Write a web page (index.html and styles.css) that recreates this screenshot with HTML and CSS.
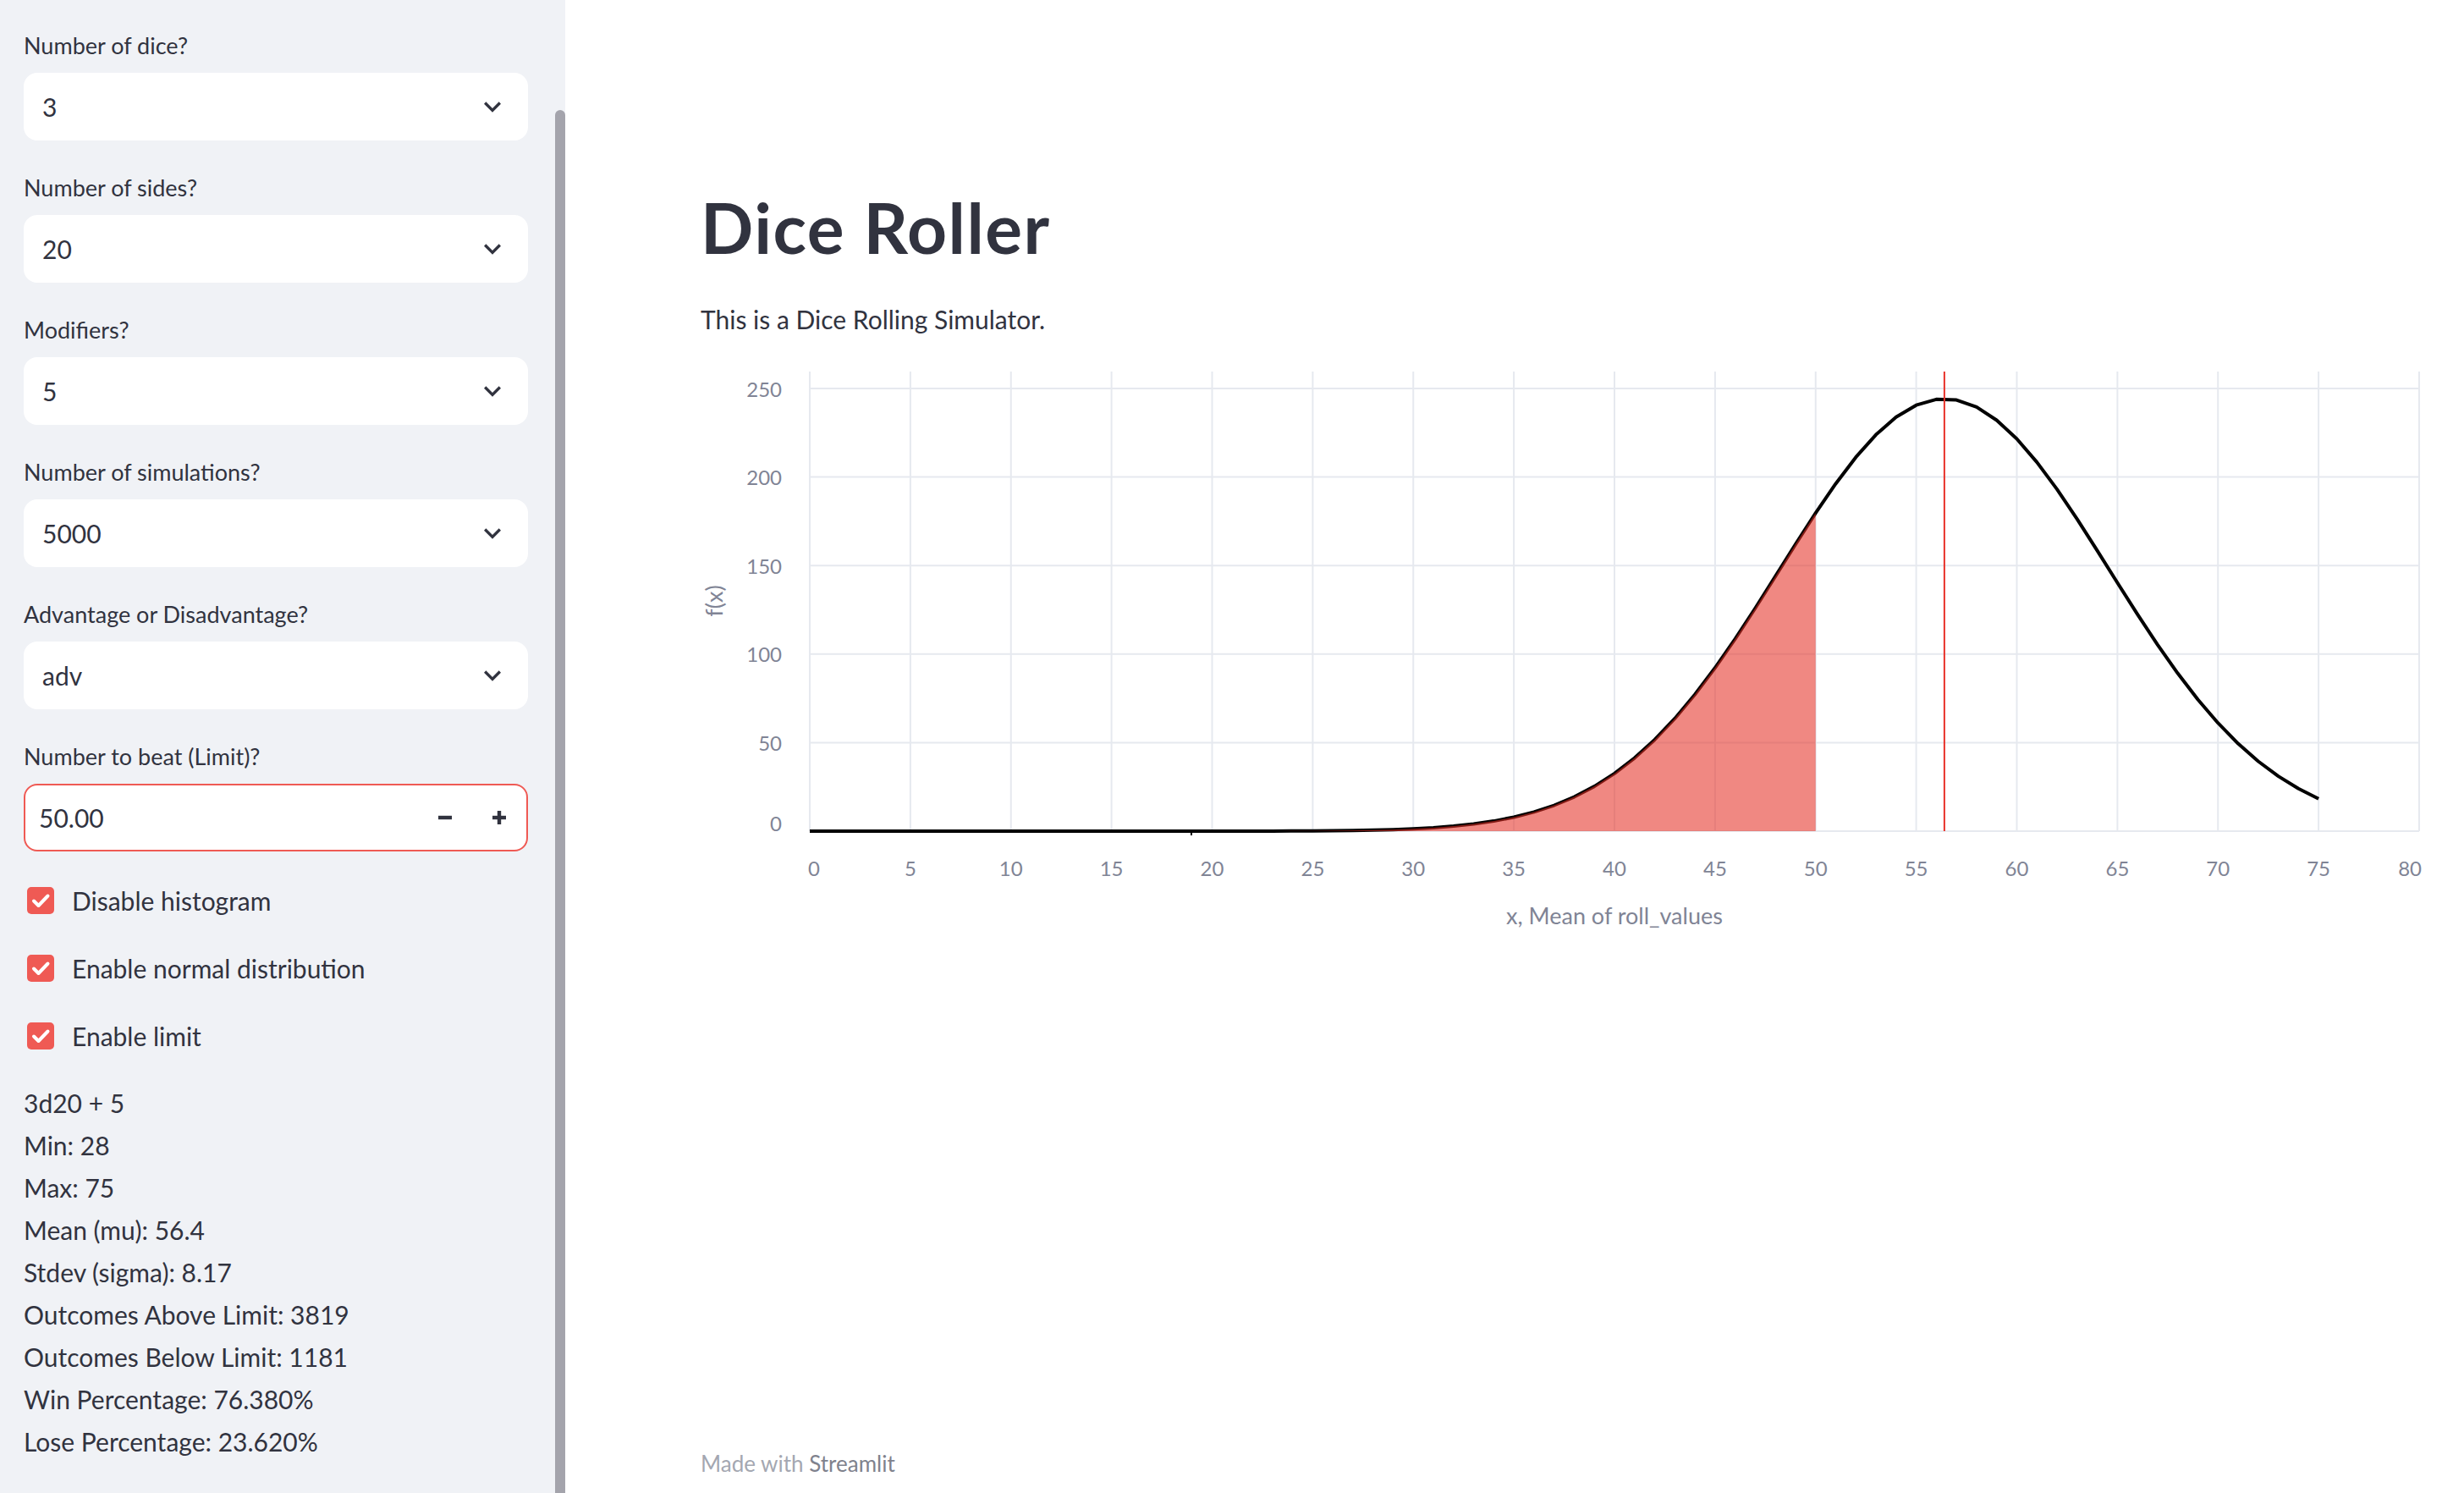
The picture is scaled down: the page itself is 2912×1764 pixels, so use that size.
FILE: index.html
```html
<!DOCTYPE html>
<html lang="en">
<head>
<meta charset="utf-8">
<title>Dice Roller</title>
<link rel="stylesheet" href="styles.css">
</head>
<body>
<div class="app">
  <aside class="sidebar">
    <div class="sb-content">
      <div class="field">
        <label class="lbl">Number of dice?</label>
        <div class="select"><span>3</span><svg class="chev" viewBox="0 0 24 24"><path d="M16.59 8.59L12 13.17 7.41 8.59 6 10l6 6 6-6z"/></svg></div>
      </div>
      <div class="field">
        <label class="lbl">Number of sides?</label>
        <div class="select"><span>20</span><svg class="chev" viewBox="0 0 24 24"><path d="M16.59 8.59L12 13.17 7.41 8.59 6 10l6 6 6-6z"/></svg></div>
      </div>
      <div class="field">
        <label class="lbl">Modifiers?</label>
        <div class="select"><span>5</span><svg class="chev" viewBox="0 0 24 24"><path d="M16.59 8.59L12 13.17 7.41 8.59 6 10l6 6 6-6z"/></svg></div>
      </div>
      <div class="field">
        <label class="lbl">Number of simulations?</label>
        <div class="select"><span>5000</span><svg class="chev" viewBox="0 0 24 24"><path d="M16.59 8.59L12 13.17 7.41 8.59 6 10l6 6 6-6z"/></svg></div>
      </div>
      <div class="field">
        <label class="lbl">Advantage or Disadvantage?</label>
        <div class="select"><span>adv</span><svg class="chev" viewBox="0 0 24 24"><path d="M16.59 8.59L12 13.17 7.41 8.59 6 10l6 6 6-6z"/></svg></div>
      </div>
      <div class="field">
        <label class="lbl">Number to beat (Limit)?</label>
        <div class="numinput">
          <span class="val">50.00</span>
          <span class="step"><svg class="stepicon" viewBox="0 0 20 20"><rect x="2" y="7.8" width="16" height="4.4"/></svg></span>
          <span class="step"><svg class="stepicon" viewBox="0 0 20 20"><rect x="2" y="7.8" width="16" height="4.4"/><rect x="7.8" y="2" width="4.4" height="16"/></svg></span>
        </div>
      </div>
      <div class="checks">
        <div class="check"><span class="box"><svg viewBox="0 0 32 32"><path d="M8 16.5l5.5 5.5L24.5 10.5" /></svg></span><span>Disable histogram</span></div>
        <div class="check"><span class="box"><svg viewBox="0 0 32 32"><path d="M8 16.5l5.5 5.5L24.5 10.5" /></svg></span><span>Enable normal distribution</span></div>
        <div class="check"><span class="box"><svg viewBox="0 0 32 32"><path d="M8 16.5l5.5 5.5L24.5 10.5" /></svg></span><span>Enable limit</span></div>
      </div>
      <div class="stats">
        <p>3d20 + 5</p>
        <p>Min: 28</p>
        <p>Max: 75</p>
        <p>Mean (mu): 56.4</p>
        <p>Stdev (sigma): 8.17</p>
        <p>Outcomes Above Limit: 3819</p>
        <p>Outcomes Below Limit: 1181</p>
        <p>Win Percentage: 76.380%</p>
        <p>Lose Percentage: 23.620%</p>
      </div>
    </div>
    <div class="thumb"></div>
  </aside>
  <main class="main">
    <h1 class="title">Dice Roller</h1>
    <p class="intro">This is a Dice Rolling Simulator.</p>
    <svg class="chart" width="2100" height="680" viewBox="812 430 2100 680">
      <g class="grid">
        <line x1="957" y1="439" x2="957" y2="982"/>
        <line x1="1075.9" y1="439" x2="1075.9" y2="982"/>
        <line x1="1194.75" y1="439" x2="1194.75" y2="982"/>
        <line x1="1313.6" y1="439" x2="1313.6" y2="982"/>
        <line x1="1432.5" y1="439" x2="1432.5" y2="982"/>
        <line x1="1551.4" y1="439" x2="1551.4" y2="982"/>
        <line x1="1670.25" y1="439" x2="1670.25" y2="982"/>
        <line x1="1789.1" y1="439" x2="1789.1" y2="982"/>
        <line x1="1908" y1="439" x2="1908" y2="982"/>
        <line x1="2026.9" y1="439" x2="2026.9" y2="982"/>
        <line x1="2145.75" y1="439" x2="2145.75" y2="982"/>
        <line x1="2264.6" y1="439" x2="2264.6" y2="982"/>
        <line x1="2383.5" y1="439" x2="2383.5" y2="982"/>
        <line x1="2502.4" y1="439" x2="2502.4" y2="982"/>
        <line x1="2621.25" y1="439" x2="2621.25" y2="982"/>
        <line x1="2740.1" y1="439" x2="2740.1" y2="982"/>
        <line x1="2859" y1="439" x2="2859" y2="982"/>
        <line x1="957" y1="982" x2="2859" y2="982"/>
        <line x1="957" y1="877.4" x2="2859" y2="877.4"/>
        <line x1="957" y1="772.8" x2="2859" y2="772.8"/>
        <line x1="957" y1="668.2" x2="2859" y2="668.2"/>
        <line x1="957" y1="563.6" x2="2859" y2="563.6"/>
        <line x1="957" y1="459" x2="2859" y2="459"/>
      </g>
      <path id="curve" class="curve" d="M957 982"/>
      <path id="area" class="area" d="M957 982"/>
      <line class="meanline" x1="2297.9" y1="439" x2="2297.9" y2="982"/>
      <rect class="tickmark" x="1407" y="982" width="2" height="5"/>
      <g class="ylabels">
        <text x="924" y="972">0</text>
        <text x="924" y="877.4">50</text>
        <text x="924" y="772.8">100</text>
        <text x="924" y="668.2">150</text>
        <text x="924" y="563.6">200</text>
        <text x="924" y="459">250</text>
      </g>
      <g class="xlabels">
        <text x="955" y="1025" class="start">0</text>
        <text x="1075.9" y="1025">5</text>
        <text x="1194.75" y="1025">10</text>
        <text x="1313.6" y="1025">15</text>
        <text x="1432.5" y="1025">20</text>
        <text x="1551.4" y="1025">25</text>
        <text x="1670.25" y="1025">30</text>
        <text x="1789.1" y="1025">35</text>
        <text x="1908" y="1025">40</text>
        <text x="2026.9" y="1025">45</text>
        <text x="2145.75" y="1025">50</text>
        <text x="2264.6" y="1025">55</text>
        <text x="2383.5" y="1025">60</text>
        <text x="2502.4" y="1025">65</text>
        <text x="2621.25" y="1025">70</text>
        <text x="2740.1" y="1025">75</text>
        <text x="2862" y="1025" class="end">80</text>
      </g>
      <text class="axtitle" x="1908" y="1081">x, Mean of roll_values</text>
      <text class="axtitle" x="843" y="710" transform="rotate(-90 843 710)">f(x)</text>
    </svg>
    <footer class="footer">Made with <span class="brand">Streamlit</span></footer>
  </main>
</div>
<script src="script.js"></script>
</body>
</html>
```

FILE: styles.css
```css
html, body {
  margin: 0;
  padding: 0;
}
body {
  font-family: Lato, "Noto Sans", sans-serif;
  color: #31333f;
  background: #ffffff;
}
.app {
  display: flex;
  height: 100vh;
  overflow: hidden;
}
.sidebar {
  width: 668px;
  flex: none;
  background: #f0f2f6;
  position: relative;
  overflow: hidden;
}
.sb-content {
  padding: 30px 44px 0 28px;
  display: flex;
  flex-direction: column;
  gap: 32px;
}
.field {
  display: flex;
  flex-direction: column;
}
.lbl {
  font-size: 27px;
  line-height: 48px;
  margin-bottom: 8px;
}
.select {
  height: 80px;
  background: #ffffff;
  border-radius: 16px;
  display: flex;
  align-items: center;
  justify-content: space-between;
  padding: 0 22px;
  font-size: 30px;
}
.chev {
  width: 40px;
  height: 40px;
  fill: #31333f;
}
.numinput {
  height: 80px;
  box-sizing: border-box;
  border: 2px solid #ef5a54;
  border-radius: 16px;
  background: #ffffff;
  display: flex;
  align-items: center;
  padding-left: 16px;
  font-size: 30px;
}
.numinput .val {
  flex: 1;
}
.step {
  width: 64px;
  height: 100%;
  display: flex;
  align-items: center;
  justify-content: center;
}
.stepicon {
  width: 20px;
  height: 20px;
  fill: #31333f;
}
.checks {
  display: flex;
  flex-direction: column;
  gap: 32px;
  padding-top: 2px;
  margin-bottom: -2px;
}
.check {
  display: flex;
  align-items: center;
  height: 48px;
  font-size: 30px;
}
.box {
  width: 32px;
  height: 32px;
  border-radius: 5px;
  background: #ef5a54;
  margin-left: 4px;
  margin-right: 21px;
  display: flex;
  align-items: center;
  justify-content: center;
}
.box svg {
  width: 32px;
  height: 32px;
  fill: none;
  stroke: #ffffff;
  stroke-width: 4;
  stroke-linecap: round;
  stroke-linejoin: round;
}
.stats p {
  margin: 0;
  font-size: 30px;
  line-height: 50px;
}
.thumb {
  position: absolute;
  right: 0;
  top: 130px;
  bottom: 0;
  width: 12px;
  background: #a4a4ac;
  border-radius: 6px 6px 0 0;
}
.main {
  flex: 1;
  min-width: 0;
  padding-left: 160px;
  padding-top: 219px;
  display: flex;
  flex-direction: column;
}
.title {
  margin: 0;
  font-size: 82px;
  line-height: 98px;
  font-weight: 700;
  letter-spacing: 1.5px;
  color: #31333f;
}
.intro {
  margin: 35px 0 0;
  font-size: 30px;
  line-height: 51px;
}
.chart {
  display: block;
  margin-top: 27px;
  margin-left: -16px;
  flex: none;
}
.grid line {
  stroke: #e6e9ef;
  stroke-width: 2;
}
.curve {
  fill: none;
  stroke: #000000;
  stroke-width: 4;
  stroke-linejoin: round;
}
.area {
  fill: rgba(228, 45, 35, 0.57);
  stroke: none;
}
.meanline {
  stroke: #e8332a;
  stroke-width: 2;
}
.tickmark {
  fill: #000000;
}
.ylabels text {
  font-size: 24px;
  fill: #808495;
  text-anchor: end;
  dominant-baseline: central;
}
.xlabels text {
  font-size: 24px;
  fill: #808495;
  text-anchor: middle;
  dominant-baseline: central;
}
.xlabels text.start {
  text-anchor: start;
}
.xlabels text.end {
  text-anchor: end;
}
.axtitle {
  font-size: 27px;
  fill: #808495;
  text-anchor: middle;
  dominant-baseline: central;
}
.footer {
  margin-top: auto;
  padding-bottom: 13px;
  font-size: 26px;
  line-height: 44px;
  color: #a4a7b1;
}
.brand {
  color: #7f828d;
}
```

FILE: script.js
```js
(function () {
  var mu = 56.4, s = 8.17, n = 5000;
  var k = n / (s * Math.sqrt(2 * Math.PI));
  function X(v) { return 957 + v * 23.775; }
  function Y(v) { return 982 - k * Math.exp(-0.5 * Math.pow((v - mu) / s, 2)) * 2.092; }
  var d = '';
  for (var v = 0; v <= 75; v++) {
    d += (v === 0 ? 'M' : 'L') + X(v).toFixed(2) + ' ' + Y(v).toFixed(2) + ' ';
  }
  document.getElementById('curve').setAttribute('d', d);
  var a = 'M' + X(0).toFixed(2) + ' 982 ';
  for (var w = 0; w <= 50; w++) {
    a += 'L' + X(w).toFixed(2) + ' ' + Y(w).toFixed(2) + ' ';
  }
  a += 'L' + X(50).toFixed(2) + ' 982 Z';
  document.getElementById('area').setAttribute('d', a);
})();
```
